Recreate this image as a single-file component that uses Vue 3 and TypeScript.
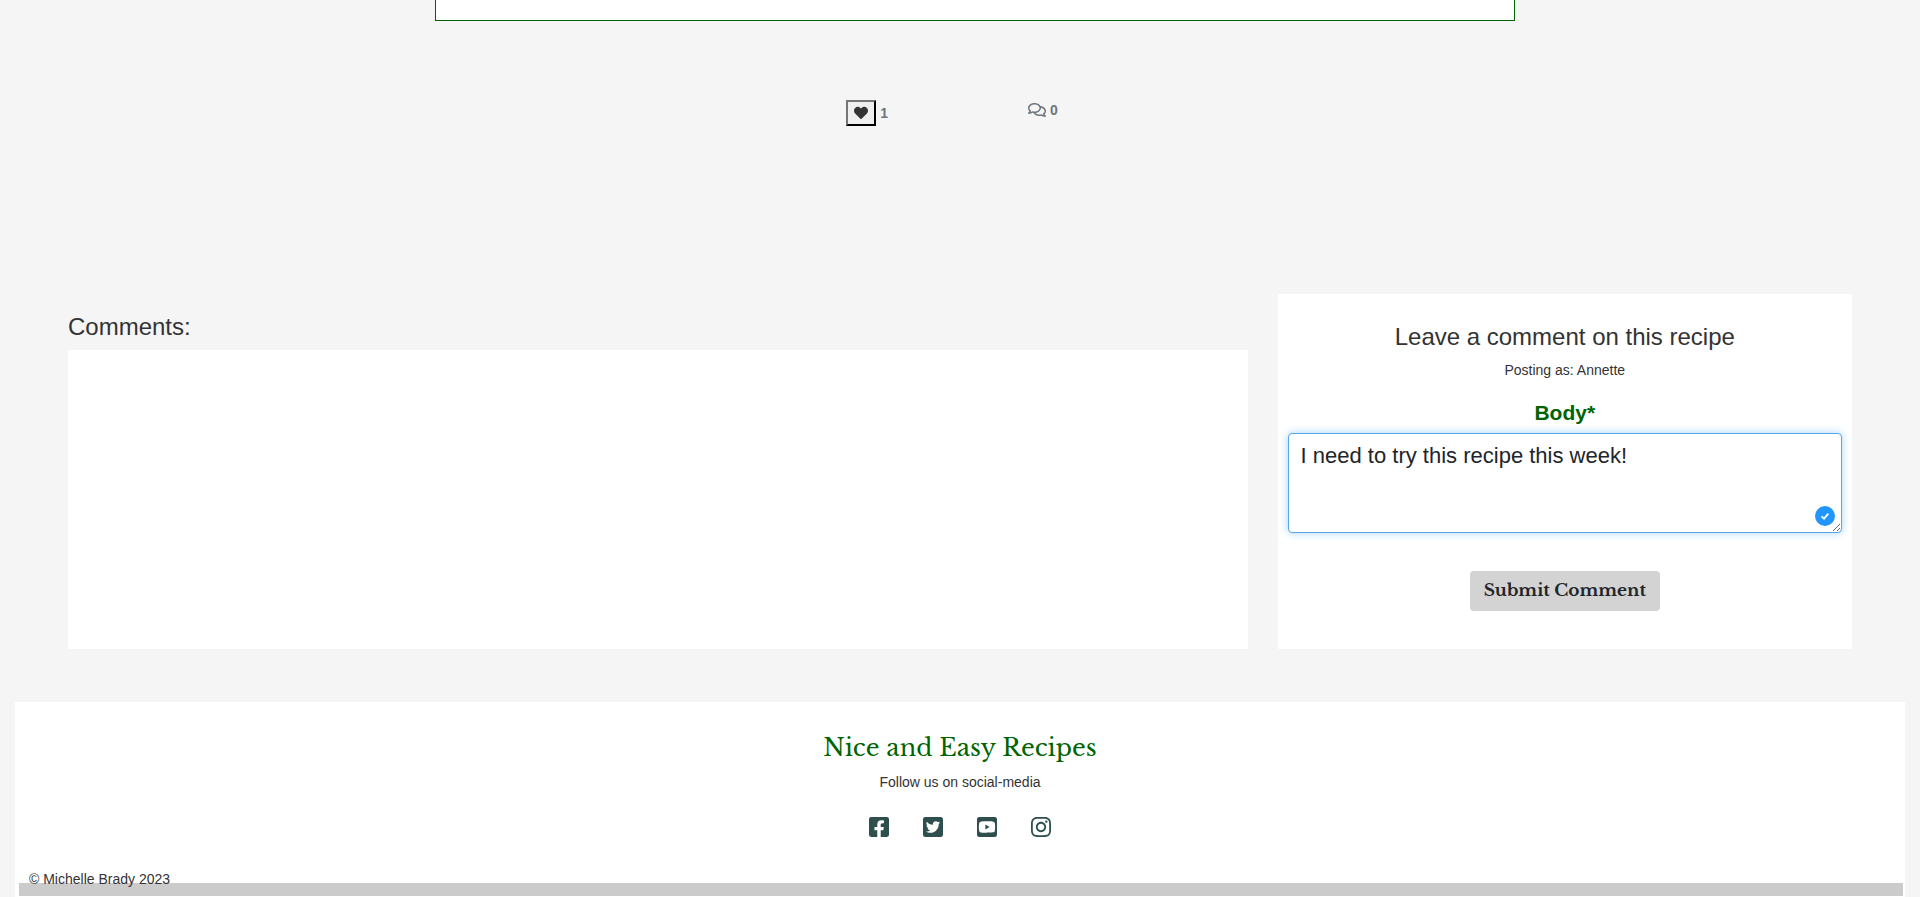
<script setup lang="ts">
import { onMounted, ref } from 'vue'

interface SocialLink {
  name: string
  path: string
}

const likes = ref(1)
const commentCount = ref(0)
const username = 'Annette'
const body = ref('I need to try this recipe this week!')
const bodyField = ref<HTMLTextAreaElement | null>(null)

const socialLinks: SocialLink[] = [
  {
    name: 'Facebook',
    path: 'M400 32H48A48 48 0 0 0 0 80v352a48 48 0 0 0 48 48h137.25V327.69h-63V256h63v-54.64c0-62.15 37-96.48 93.67-96.48 27.14 0 55.52 4.84 55.52 4.84v61h-31.27c-30.81 0-40.42 19.12-40.42 38.73V256h68.78l-11 71.69h-57.78V480H400a48 48 0 0 0 48-48V80a48 48 0 0 0-48-48z',
  },
  {
    name: 'Twitter',
    path: 'M400 32H48C21.5 32 0 53.5 0 80v352c0 26.5 21.5 48 48 48h352c26.5 0 48-21.5 48-48V80c0-26.5-21.5-48-48-48zm-48.9 158.8c.2 2.8.2 5.7.2 8.5 0 86.7-66 186.6-186.6 186.6-37.2 0-71.7-10.8-100.7-29.4 5.3.6 10.4.8 15.8.8 30.7 0 58.9-10.4 81.4-28-28.8-.6-53-19.5-61.3-45.5 10.1 1.5 19.2 1.5 29.6-1.2-30-6.1-52.5-32.5-52.5-64.4v-.8c8.7 4.9 18.9 7.9 29.6 8.3a65.447 65.447 0 0 1-29.2-54.6c0-12.2 3.2-23.4 8.9-33.1 32.3 39.8 80.8 65.8 135.2 68.6-9.3-44.5 24-80.6 64-80.6 18.9 0 35.9 7.9 47.9 20.7 14.8-2.8 29-8.3 41.6-15.8-4.9 15.2-15.2 28-28.8 36.1 13.2-1.4 26-5.1 37.8-10.2-8.9 13.1-20.1 24.7-32.9 34z',
  },
  {
    name: 'YouTube',
    path: 'M186.8 202.1l95.2 54.1-95.2 54.1V202.1zM448 80v352c0 26.5-21.5 48-48 48H48c-26.5 0-48-21.5-48-48V80c0-26.5 21.5-48 48-48h352c26.5 0 48 21.5 48 48zm-42 176.3s0-59.6-7.6-88.2c-4.2-15.8-16.5-28.2-32.2-32.4C337.9 128 224 128 224 128s-113.9 0-142.2 7.7c-15.7 4.2-28 16.6-32.2 32.4-7.6 28.5-7.6 88.2-7.6 88.2s0 59.6 7.6 88.2c4.2 15.8 16.5 27.7 32.2 31.9C110.1 384 224 384 224 384s113.9 0 142.2-7.7c15.7-4.2 28-16.1 32.2-31.9 7.6-28.5 7.6-88.1 7.6-88.1z',
  },
  {
    name: 'Instagram',
    path: 'M224.1 141c-63.6 0-114.9 51.3-114.9 114.9s51.3 114.9 114.9 114.9S339 319.5 339 255.9 287.7 141 224.1 141zm0 189.6c-41.1 0-74.7-33.5-74.7-74.7s33.5-74.7 74.7-74.7 74.7 33.5 74.7 74.7-33.6 74.7-74.7 74.7zm146.4-194.3c0 14.9-12 26.8-26.8 26.8-14.9 0-26.8-12-26.8-26.8s12-26.8 26.8-26.8 26.8 12 26.8 26.8zm76.1 27.2c-1.7-35.9-9.9-67.7-36.2-93.9-26.2-26.2-58-34.4-93.9-36.2-37-2.1-147.9-2.1-184.9 0-35.8 1.7-67.6 9.9-93.9 36.1s-34.4 58-36.2 93.9c-2.1 37-2.1 147.9 0 184.9 1.7 35.9 9.9 67.7 36.2 93.9s58 34.4 93.9 36.2c37 2.1 147.9 2.1 184.9 0 35.9-1.7 67.7-9.9 93.9-36.2 26.2-26.2 34.4-58 36.2-93.9 2.1-37 2.1-147.8 0-184.8zM398.8 388c-7.8 19.6-22.9 34.7-42.6 42.6-29.5 11.7-99.5 9-132.1 9s-102.7 2.6-132.1-9c-19.6-7.8-34.7-22.9-42.6-42.6-11.7-29.5-9-99.5-9-132.1s-2.6-102.7 9-132.1c7.8-19.6 22.9-34.7 42.6-42.6 29.5-11.7 99.5-9 132.1-9s102.7-2.6 132.1 9c19.6 7.8 34.7 22.9 42.6 42.6 11.7 29.5 9 99.5 9 132.1s2.7 102.7-9 132.1z',
  },
]

function submitComment(): void {
  if (body.value.trim()) body.value = ''
}

onMounted(() => bodyField.value?.focus())
</script>

<template>
  <div class="page">
    <main>
      <div class="recipe-wrap">
        <article class="recipe-card"></article>
      </div>

      <div class="reactions">
        <div class="reaction">
          <button class="like" type="button" aria-label="Like this recipe" @click="likes++">
            <svg viewBox="0 0 512 512" width="14" height="14" aria-hidden="true">
              <path d="M462.3 62.6C407.5 15.9 326 24.3 275.7 76.2L256 96.5l-19.7-20.3C186.1 24.3 104.5 15.9 49.7 62.6c-62.8 53.6-66.1 149.8-9.9 207.9l193.5 199.8c12.5 12.9 32.8 12.9 45.3 0l193.5-199.8c56.3-58.1 53-154.3-9.8-207.9z" />
            </svg>
          </button>
          <span>{{ likes }}</span>
        </div>
        <div class="reaction">
          <svg viewBox="0 0 576 512" width="18" height="16" aria-hidden="true">
            <path d="M532 386.2c27.5-27.1 44-61.1 44-98.2 0-80-76.5-146.1-176.2-157.9C368.3 72.5 294.3 32 208 32 93.1 32 0 103.6 0 192c0 37 16.5 71 44 98.2-15.3 30.7-37.3 54.5-37.7 54.9-6.3 6.7-8.1 16.5-4.4 25 3.6 8.5 12 14 21.2 14 53.5 0 96.7-20.2 125.2-38.8 9.2 2.1 18.7 3.7 28.4 4.9C208.1 407.6 281.8 448 368 448c20.8 0 40.8-2.4 59.8-6.8C456.3 459.7 499.4 480 553 480c9.2 0 17.5-5.5 21.2-14 3.6-8.5 1.9-18.3-4.4-25-.4-.3-22.5-24.1-37.8-54.8zm-392.8-92.3L122.1 305c-14.1 9.1-28.5 16.3-43.1 21.4 2.7-4.7 5.4-9.7 8-14.8l15.5-31.1L77.7 256C64.2 242.6 48 220.7 48 192c0-60.7 73.3-112 160-112s160 51.3 160 112-73.3 112-160 112c-16.5 0-33-1.9-49-5.6l-19.8-4.5zM498.3 352l-24.7 24.4 15.5 31.1c2.6 5.1 5.3 10.1 8 14.8-14.6-5.1-29-12.3-43.1-21.4l-17.1-11.1-19.9 4.6c-16 3.7-32.5 5.6-49 5.6-54 0-102.2-20.1-131.3-49.7C338 339.5 416 272.9 416 192c0-3.4-.4-6.7-.7-10C479.7 196.5 528 238.8 528 288c0 28.7-16.2 50.6-29.7 64z" />
          </svg>
          <span>{{ commentCount }}</span>
        </div>
      </div>

      <div class="discussion">
        <section class="comments">
          <h3>Comments:</h3>
          <div class="comment-list"></div>
        </section>

        <section class="comment-form">
          <h3>Leave a comment on this recipe</h3>
          <p>Posting as: {{ username }}</p>
          <form @submit.prevent="submitComment">
            <label for="comment-body">Body*</label>
            <div class="field">
              <textarea id="comment-body" ref="bodyField" v-model="body" spellcheck="false" required></textarea>
              <svg class="checked" viewBox="0 0 20 20" width="20" height="20" aria-hidden="true">
                <circle cx="10" cy="10" r="10" fill="#2196ff" />
                <path d="M6.6 10.4l2.4 2.3 4.3-5" fill="none" stroke="#fff" stroke-width="1.8" />
              </svg>
            </div>
            <button class="submit" type="submit">Submit Comment</button>
          </form>
        </section>
      </div>
    </main>

    <footer>
      <h2>Nice and Easy Recipes</h2>
      <p>Follow us on social-media</p>
      <nav aria-label="Social media">
        <a v-for="link in socialLinks" :key="link.name" href="#" :aria-label="link.name">
          <svg viewBox="0 32 448 448" width="20" height="20" aria-hidden="true">
            <path :d="link.path" />
          </svg>
        </a>
      </nav>
      <div class="copyright">© Michelle Brady 2023</div>
      <div class="bar"></div>
    </footer>
  </div>
</template>

<style>
body {
  margin: 0;
  background: #f5f5f5;
}
</style>

<style scoped>
.page,
.page * {
  box-sizing: border-box;
}

.page {
  min-height: 100vh;
  display: flex;
  flex-direction: column;
  overflow: hidden;
  color: #333;
  background: #f5f5f5;
  font: 14px/20px "Liberation Sans", Arial, sans-serif;
}

h2,
h3,
p {
  margin: 0;
}

h3 {
  font-size: 24px;
  line-height: 28px;
  font-weight: 400;
}

svg {
  display: block;
}

.recipe-wrap {
  padding-left: 30px;
}

.recipe-card {
  width: 57.15%;
  min-height: 22px;
  margin: -1px auto 0;
  background: #fff;
  border: 1px solid #006400;
}

.reactions {
  display: flex;
  justify-content: center;
  align-items: flex-start;
  gap: 140px;
  padding: 79px 16px 168px 0;
  color: #6c757d;
  font-weight: 700;
}

.reaction {
  display: flex;
  align-items: center;
  gap: 4px;
}

.reaction > svg {
  fill: #6c757d;
}

.like {
  padding: 4px 6px;
  border: 2px outset #333;
  border-color: #767676 #212121 #212121 #767676;
  background: #efefef;
}

.like svg {
  fill: #333;
}

.discussion {
  display: flex;
  gap: 30px;
  padding: 0 68px;
}

.comments {
  flex: 1;
  display: flex;
  flex-direction: column;
  gap: 9px;
  padding-top: 19px;
}

.comment-list {
  flex: 1;
  background: #fff;
}

.comment-form {
  width: 32.2%;
  padding: 29px 10px 38px;
  background: #fff;
  text-align: center;
}

.comment-form p {
  margin: 9px 0 21px;
}

form {
  display: flex;
  flex-direction: column;
  align-items: center;
}

label {
  margin-bottom: 8px;
  color: #006400;
  font-size: 21px;
  line-height: 24px;
  font-weight: 700;
}

.field {
  position: relative;
  width: 100%;
}

textarea {
  display: block;
  width: 100%;
  height: 100px;
  padding: 6px 12px;
  border: 1px solid #56a6e8;
  border-radius: 4px;
  outline: 0;
  background: #fff;
  box-shadow: 0 0 8px #a5d4fa;
  color: #212529;
  font: 22px/32px "Liberation Sans", Arial, sans-serif;
  resize: vertical;
  caret-color: transparent;
}

.checked {
  position: absolute;
  right: 7px;
  bottom: 7px;
}

.submit {
  margin-top: 38px;
  padding: 5px 14px;
  border: 0;
  border-radius: 4px;
  background: #d3d3d3;
  color: #212529;
  font: 700 17px/30px "Libre Baskerville", "Liberation Serif", serif;
}

footer {
  flex: 1;
  display: flex;
  flex-direction: column;
  align-items: center;
  margin: 53px 15px 0;
  padding: 30px 2px 2px;
  background: #fff;
}

footer h2 {
  color: #006400;
  font: 400 24px/32px "Libre Baskerville", "Liberation Serif", serif;
}

footer p {
  margin: 8px 0 25px;
}

nav {
  display: flex;
  gap: 34px;
}

nav svg {
  fill: #2f4f4f;
}

.copyright {
  position: relative;
  align-self: flex-start;
  margin: 32px 12px -6px;
}

.bar {
  align-self: stretch;
  height: 13px;
  margin-left: 2px;
  background: #cbcbcb;
}
</style>
